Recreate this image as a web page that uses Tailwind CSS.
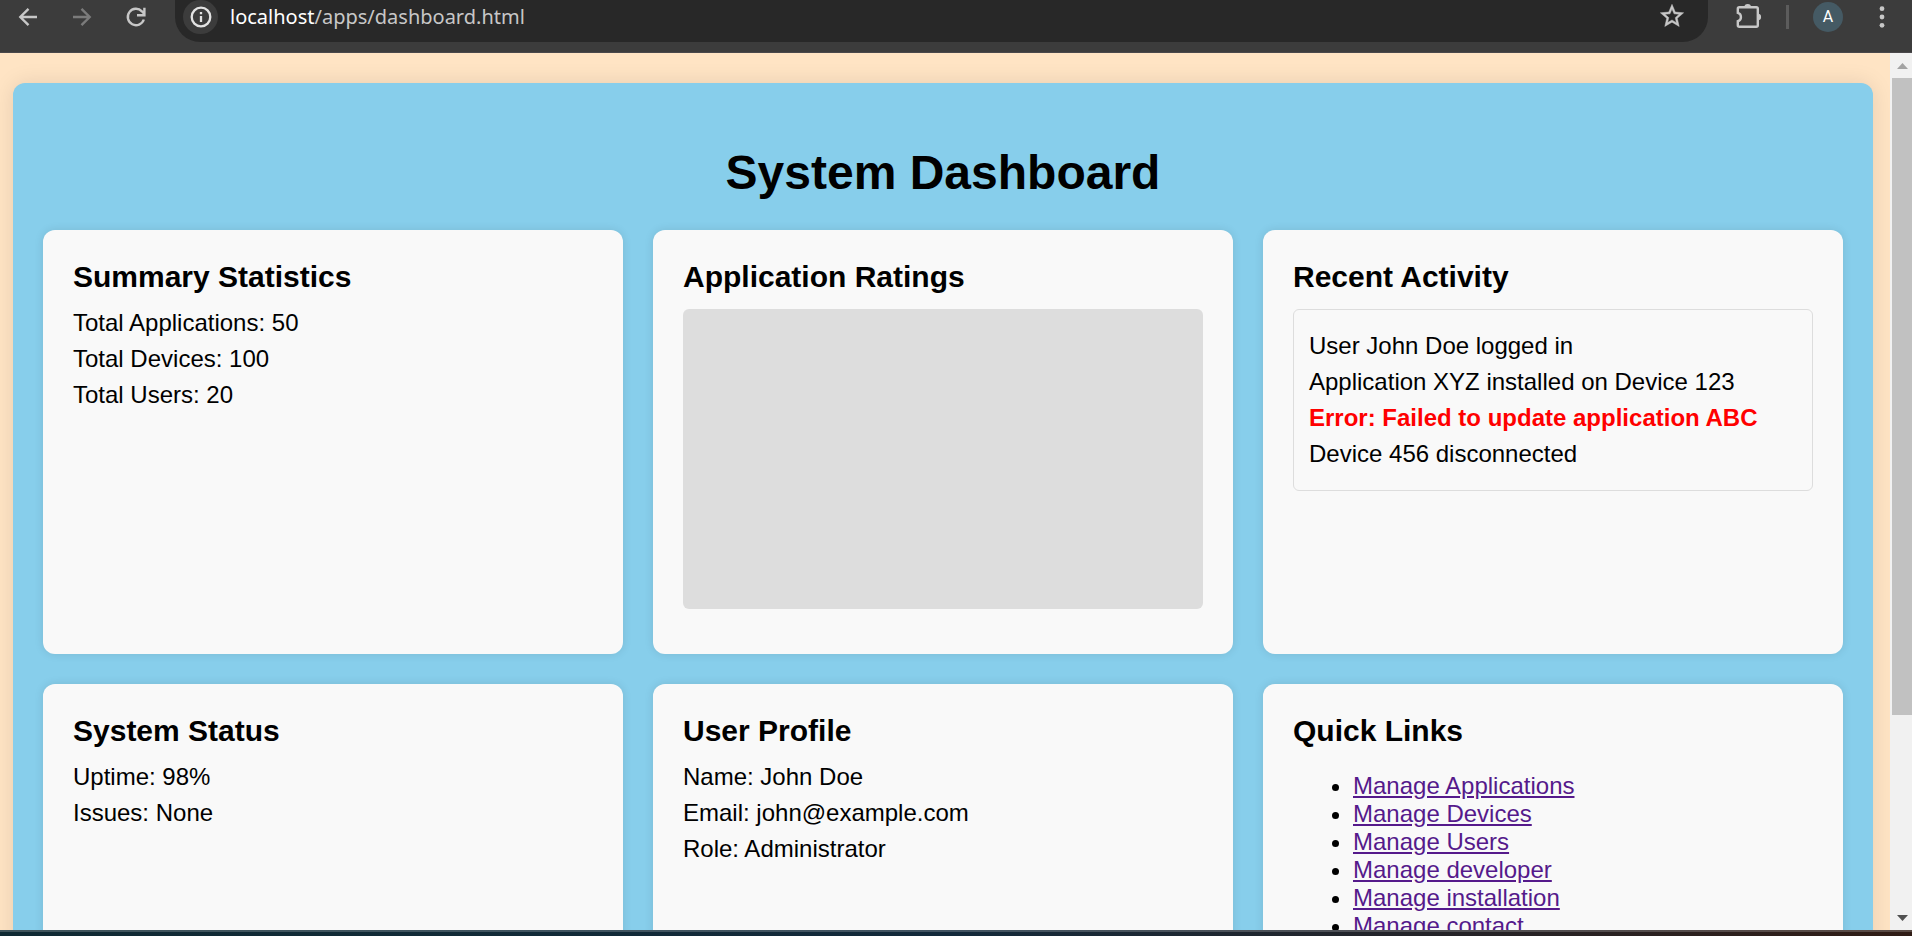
<!DOCTYPE html>
<html lang="en">
<head>
<meta charset="utf-8">
<title>System Dashboard</title>
<script src="https://cdn.jsdelivr.net/npm/@tailwindcss/browser@4"></script>
</head>
<body class="flex h-screen flex-col overflow-hidden bg-[#ffe4c4] font-['Liberation_Sans',Arial,sans-serif] text-2xl/[27px] text-black">

  <!-- Browser toolbar -->
  <header class="flex h-[53px] shrink-0 items-start border-b border-[#4a484b] bg-[#3c3c3c] text-[#c7c7c7]">
    <nav class="flex h-[33px] shrink-0 items-center gap-[26px] pr-[24px] pl-[15px]">
      <button type="button" aria-label="Back" class="size-7">
        <svg viewBox="0 0 28 28" class="size-7" fill="none" stroke="currentColor" stroke-width="2.4"><path d="M22 14H6M13.500 5.800L5.300 14l8.200 8.200"/></svg>
      </button>
      <button type="button" aria-label="Forward" class="size-7 text-[#7b7b7b]">
        <svg viewBox="0 0 28 28" class="size-7" fill="none" stroke="currentColor" stroke-width="2.4"><path d="M4 14H20M12.500 5.800l8.200 8.200-8.200 8.200"/></svg>
      </button>
      <button type="button" aria-label="Reload" class="size-7">
        <svg viewBox="0 0 28 28" class="size-7" fill="none" stroke="currentColor" stroke-width="2.4"><path d="M20.800 16.500A8.200 8.200 0 1 1 18.900 8.300L21.300 11M21.400 4.800v7.400h-7.400"/></svg>
      </button>
    </nav>
    <div class="flex h-[42px] min-w-0 flex-1 items-start rounded-b-[25px] bg-[#282828] pr-[22px] pl-2">
      <button type="button" aria-label="Site information" class="flex h-[34px] w-[35px] shrink-0 items-center justify-center rounded-[17px] bg-[#3c3c3c] text-[#e3e3e3]">
        <svg viewBox="0 0 24 24" class="size-6" fill="none" stroke="currentColor" stroke-width="2.3"><circle cx="12" cy="12" r="9.300"/><path d="M12 11v6M12 7v2.200"/></svg>
      </button>
      <div class="ml-3 flex-1 font-['Noto_Sans',sans-serif] text-xl/[33px] text-[#c7c7c7]"><span class="text-white">localhost</span>/apps/dashboard.html</div>
      <button type="button" aria-label="Bookmark this page" class="mt-[2px] size-7 shrink-0">
        <svg viewBox="0 0 24 24" class="size-7" fill="currentColor" stroke="currentColor" stroke-width=".4"><path fill-rule="evenodd" d="M22 9.240l-7.190-.62L12 2 9.190 8.630 2 9.240l5.460 4.730L5.820 21 12 17.270 18.180 21l-1.630-7.030L22 9.240zM12 15.400l-3.760 2.270 1-4.280-3.320-2.880 4.380-.38L12 6.100l1.710 4.040 4.380.38-3.320 2.880 1 4.280L12 15.400z"/></svg>
      </button>
    </div>
    <div class="flex h-[33px] shrink-0 items-center pr-[22px] pl-[27px]">
      <button type="button" aria-label="Extensions" class="size-7">
        <svg viewBox="0 0 28 28" class="size-7" fill="none" stroke="currentColor" stroke-width="2.4"><path d="M2.800 9.800V5.700Q2.800 4.200 4.300 4.200H21.300Q22.800 4.200 22.800 5.700V22.300Q22.800 23.800 21.300 23.800H4.300Q2.800 23.800 2.800 22.300V18.200C7 17.200 7 10.800 2.800 9.800Z"/><path fill="currentColor" stroke="none" d="M9.400 4.200a3.300 3.300 0 0 1 6.600 0zM22.800 10.700a3.300 3.300 0 0 1 0 6.600z"/></svg>
      </button>
      <span class="ml-[23px] h-6 w-[3px] bg-[#5c5c5c]"></span>
      <button type="button" aria-label="Profile" class="ml-6 size-[30px] rounded-full bg-[#455a64] font-[Roboto,sans-serif] text-base/[30px] text-white">A</button>
      <button type="button" aria-label="Menu" class="ml-[31px] w-4">
        <svg viewBox="0 0 16 28" class="h-7 w-4" fill="currentColor"><circle cx="8" cy="5.700" r="2.400"/><circle cx="8" cy="14" r="2.400"/><circle cx="8" cy="22.300" r="2.400"/></svg>
      </button>
    </div>
  </header>

  <div class="flex min-h-0 flex-1">
    <div class="min-w-0 flex-1 overflow-hidden pt-[30px] pr-[17px] pl-[13px]">
      <main class="rounded-xl bg-[#87ceeb] px-[30px] pt-[62px] pb-[30px] shadow-[0_0_22px_rgba(0,0,0,0.1)]">
        <h1 class="mb-[30px] text-center text-5xl/[55px] font-bold">System Dashboard</h1>
        <div class="grid auto-rows-[424px] grid-cols-3 gap-[30px]">

          <section class="rounded-xl bg-[#f9f9f9] p-[30px] shadow-[0_0_10px_rgba(0,0,0,0.1)]">
            <h2 class="mb-[15px] text-3xl/[34px] font-bold">Summary Statistics</h2>
            <div class="flex flex-col gap-[9px]">
              <p>Total Applications: 50</p>
              <p>Total Devices: 100</p>
              <p>Total Users: 20</p>
            </div>
          </section>

          <section class="rounded-xl bg-[#f9f9f9] p-[30px] shadow-[0_0_10px_rgba(0,0,0,0.1)]">
            <h2 class="mb-[15px] text-3xl/[34px] font-bold">Application Ratings</h2>
            <div class="h-[300px] rounded-md bg-[#dddddd]"></div>
          </section>

          <section class="rounded-xl bg-[#f9f9f9] p-[30px] shadow-[0_0_10px_rgba(0,0,0,0.1)]">
            <h2 class="mb-[15px] text-3xl/[34px] font-bold">Recent Activity</h2>
            <div class="flex flex-col gap-[9px] rounded-md border border-[#dddddd] px-[15px] pt-[22px] pb-[23px]">
              <p>User John Doe logged in</p>
              <p>Application XYZ installed on Device 123</p>
              <p class="font-bold text-[#ff0000]">Error: Failed to update application ABC</p>
              <p>Device 456 disconnected</p>
            </div>
          </section>

          <section class="rounded-xl bg-[#f9f9f9] p-[30px] shadow-[0_0_10px_rgba(0,0,0,0.1)]">
            <h2 class="mb-[15px] text-3xl/[34px] font-bold">System Status</h2>
            <div class="flex flex-col gap-[9px]">
              <p>Uptime: 98%</p>
              <p>Issues: None</p>
            </div>
          </section>

          <section class="rounded-xl bg-[#f9f9f9] p-[30px] shadow-[0_0_10px_rgba(0,0,0,0.1)]">
            <h2 class="mb-[15px] text-3xl/[34px] font-bold">User Profile</h2>
            <div class="flex flex-col gap-[9px]">
              <p>Name: John Doe</p>
              <p>Email: john@example.com</p>
              <p>Role: Administrator</p>
            </div>
          </section>

          <section class="rounded-xl bg-[#f9f9f9] p-[30px] shadow-[0_0_10px_rgba(0,0,0,0.1)]">
            <h2 class="mb-6 text-3xl/[34px] font-bold">Quick Links</h2>
            <ul class="list-disc pl-[60px] leading-7">
              <li><a href="#applications" class="text-[#551a8b] underline">Manage Applications</a></li>
              <li><a href="#devices" class="text-[#551a8b] underline">Manage Devices</a></li>
              <li><a href="#users" class="text-[#551a8b] underline">Manage Users</a></li>
              <li><a href="#developer" class="text-[#551a8b] underline">Manage developer</a></li>
              <li><a href="#installation" class="text-[#551a8b] underline">Manage installation</a></li>
              <li><a href="#contact" class="text-[#551a8b] underline">Manage contact</a></li>
            </ul>
          </section>
        </div>
      </main>
    </div>

    <!-- Scrollbar -->
    <div class="flex w-[22px] shrink-0 flex-col items-end bg-[#f1f1f1]">
      <svg viewBox="0 0 22 25" class="h-[25px] w-[22px] shrink-0" fill="#a3a3a3"><path d="M7 16h11L12.500 10z"/></svg>
      <div class="h-[637px] w-5 bg-[#c1c1c1]"></div>
      <svg viewBox="0 0 22 25" class="mt-auto h-[25px] w-[22px] shrink-0" fill="#505050"><path d="M7 10h11L12.500 16z"/></svg>
    </div>
  </div>

  <!-- Window edge -->
  <footer class="h-[6px] shrink-0 bg-linear-to-r from-[#0f2a33] via-[#12293a] to-[#301c15]">
    <div class="h-[2px] bg-white/20"></div>
  </footer>
</body>
</html>
